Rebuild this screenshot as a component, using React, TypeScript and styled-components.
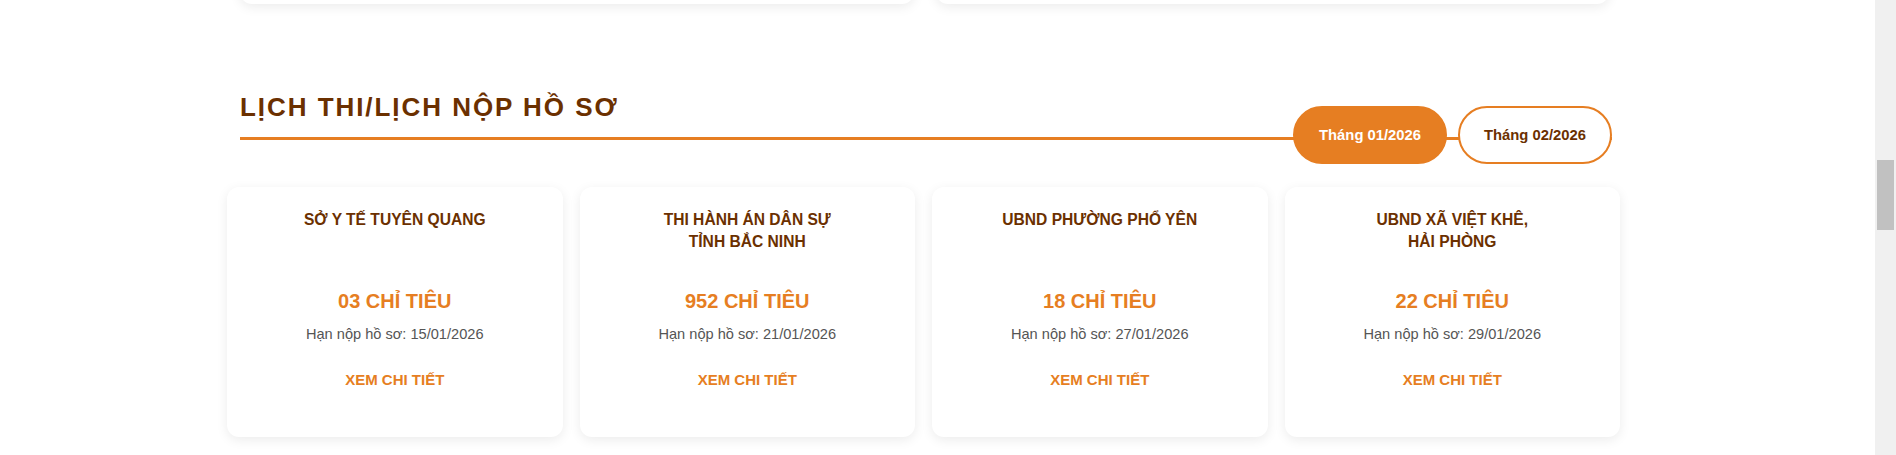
import React, { useState } from "react";
import styled, { createGlobalStyle } from "styled-components";

const ORANGE = "#e67e22";
const BROWN = "#6b3000";

const GlobalStyle = createGlobalStyle`
  html, body {
    margin: 0;
    padding: 0;
    background: #ffffff;
    overflow: hidden;
  }
  body {
    font-family: "Liberation Sans", Arial, Helvetica, sans-serif;
  }
  * { box-sizing: border-box; }
`;

const Page = styled.div`
  width: 1875px;
  height: 455px;
  overflow: hidden;
`;

const Container = styled.div`
  margin-left: 240px;
  width: 1372px;
`;

const PrevRow = styled.div`
  display: grid;
  grid-template-columns: 1fr 1fr;
  gap: 22px;
  margin-top: -56px;
  margin-right: 3px;
`;

const PrevCard = styled.div`
  height: 60px;
  background: #fff;
  border-radius: 12px;
  box-shadow: 0 3px 12px rgba(0, 0, 0, 0.08);
`;

const Header = styled.div`
  display: flex;
  justify-content: space-between;
  align-items: flex-end;
  margin-top: 87px;
  border-bottom: 3px solid ${ORANGE};
`;

const Title = styled.h2`
  margin: 0;
  padding-bottom: 14px;
  font-size: 26px;
  line-height: 32px;
  font-weight: 700;
  letter-spacing: 1.95px;
  color: ${BROWN};
  text-transform: uppercase;
`;

const Tabs = styled.div`
  display: flex;
  gap: 11px;
  margin-bottom: -27px;
`;

const Tab = styled.button<{ $active?: boolean }>`
  height: 58px;
  padding: 0 24px;
  border-radius: 29px;
  border: 2px solid ${ORANGE};
  background: ${(p) => (p.$active ? ORANGE : "#ffffff")};
  color: ${(p) => (p.$active ? "#ffffff" : BROWN)};
  font-family: "Liberation Sans", Arial, sans-serif;
  font-size: 14.8px;
  font-weight: 700;
  cursor: pointer;
  white-space: nowrap;
`;

const Cards = styled.div`
  display: grid;
  grid-template-columns: repeat(4, 1fr);
  gap: 17px;
  margin: 47px -8px 0 -13px;
`;

const Card = styled.div`
  height: 250px;
  padding: 22px 20px 0;
  background: #fff;
  border-radius: 12px;
  box-shadow: 0 3px 12px rgba(0, 0, 0, 0.08);
  text-align: center;
  display: flex;
  flex-direction: column;
  align-items: center;
`;

const Org = styled.div`
  min-height: 44.8px;
  font-size: 15.6px;
  line-height: 22.4px;
  font-weight: 700;
  color: ${BROWN};
  text-transform: uppercase;
  white-space: pre-line;
`;

const Quota = styled.div`
  margin-top: 35px;
  font-size: 20px;
  line-height: 24px;
  font-weight: 700;
  color: ${ORANGE};
`;

const Deadline = styled.div`
  margin-top: 11px;
  font-size: 14.6px;
  line-height: 20px;
  color: #555555;
`;

const More = styled.a`
  margin-top: 26px;
  font-size: 15px;
  line-height: 20px;
  font-weight: 700;
  color: ${ORANGE};
  text-decoration: none;
  cursor: pointer;
`;

const Scrollbar = styled.div`
  position: fixed;
  top: 0;
  right: 0;
  width: 21px;
  height: 100%;
  background: #f0f0f0;
`;

const Thumb = styled.div`
  position: absolute;
  top: 160px;
  left: 2px;
  right: 2px;
  height: 70px;
  background: #c1c1c1;
`;

const items = [
  { org: "SỞ Y TẾ TUYÊN QUANG", quota: "03 CHỈ TIÊU", date: "15/01/2026" },
  { org: "THI HÀNH ÁN DÂN SỰ\nTỈNH BẮC NINH", quota: "952 CHỈ TIÊU", date: "21/01/2026" },
  { org: "UBND PHƯỜNG PHỔ YÊN", quota: "18 CHỈ TIÊU", date: "27/01/2026" },
  { org: "UBND XÃ VIỆT KHÊ,\nHẢI PHÒNG", quota: "22 CHỈ TIÊU", date: "29/01/2026" },
];

export default function App() {
  const [month, setMonth] = useState(0);
  return (
    <>
      <GlobalStyle />
      <Page>
        <Container>
          <PrevRow>
            <PrevCard />
            <PrevCard />
          </PrevRow>
          <Header>
            <Title>LỊCH THI/LỊCH NỘP HỒ SƠ</Title>
            <Tabs>
              {["Tháng 01/2026", "Tháng 02/2026"].map((m, i) => (
                <Tab key={m} $active={month === i} onClick={() => setMonth(i)}>
                  {m}
                </Tab>
              ))}
            </Tabs>
          </Header>
          <Cards>
            {items.map((it) => (
              <Card key={it.org}>
                <Org>{it.org}</Org>
                <Quota>{it.quota}</Quota>
                <Deadline>Hạn nộp hồ sơ: {it.date}</Deadline>
                <More>XEM CHI TIẾT</More>
              </Card>
            ))}
          </Cards>
        </Container>
      </Page>
      <Scrollbar>
        <Thumb />
      </Scrollbar>
    </>
  );
}
